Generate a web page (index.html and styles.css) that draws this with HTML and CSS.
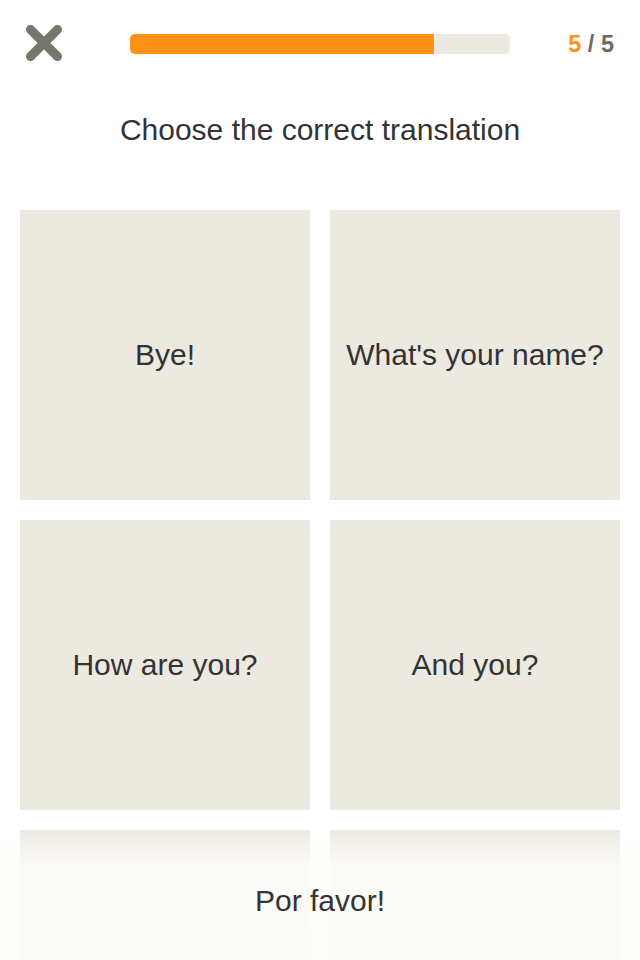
FILE: index.html
```html
<!DOCTYPE html>
<html>
<head>
<meta charset="utf-8">
<link rel="stylesheet" href="styles.css">
</head>
<body>
<div class="screen">
  <header class="top">
    <button class="close" aria-label="Close">
      <svg width="38" height="38" viewBox="0 0 38 38">
        <path d="M5.5 5.5 L32.5 32.5 M32.5 5.5 L5.5 32.5" stroke="#76766a" stroke-width="9" stroke-linecap="round" fill="none"/>
      </svg>
    </button>
    <div class="progress"><div class="fill" style="width:80%"></div></div>
    <div class="count"><span class="cur">5</span> / 5</div>
  </header>
  <h1 class="title">Choose the correct translation</h1>
  <div class="grid">
    <div class="card">Bye!</div>
    <div class="card">What's your name?</div>
    <div class="card">How are you?</div>
    <div class="card">And you?</div>
    <div class="card"></div>
    <div class="card"></div>
  </div>
  <div class="prompt">Por favor!</div>
</div>
</body>
</html>
```
FILE: styles.css
```css
html, body {
  margin: 0;
  padding: 0;
  background: #ffffff;
  overflow: hidden;
}
.screen {
  position: relative;
  width: 640px;
  height: 960px;
  overflow: hidden;
  font-family: "Liberation Sans", Arial, sans-serif;
  color: #333333;
}
.top {
  display: flex;
  align-items: center;
  height: 88px;
  padding: 0 26px 0 25px;
}
.close {
  border: 0;
  background: none;
  padding: 0;
  width: 38px;
  height: 38px;
  display: block;
  margin-top: -2px;
}
.close svg { display: block; }
.progress {
  margin-left: 67px;
  width: 380px;
  height: 20px;
  border-radius: 5px;
  background: #ece9e1;
  overflow: hidden;
}
.fill {
  height: 100%;
  background: #ff9117;
}
.count {
  margin-left: auto;
  font-weight: bold;
  font-size: 23.5px;
  color: #6b6b63;
}
.cur { color: #ff9117; }
.title {
  margin: 24px 0 0;
  text-align: center;
  font-weight: normal;
  font-size: 30px;
  line-height: 36px;
}
.grid {
  display: grid;
  grid-template-columns: 290px 290px;
  grid-auto-rows: 290px;
  gap: 20px;
  padding: 0 20px;
  margin-top: 62px;
}
.card {
  background: #ece9e1;
  display: flex;
  align-items: center;
  justify-content: center;
  font-size: 30px;
  color: #333333;
}
.prompt {
  position: absolute;
  left: 0;
  right: 0;
  top: 830px;
  bottom: 0;
  display: flex;
  align-items: center;
  justify-content: center;
  font-size: 30px;
  color: #333333;
  background: linear-gradient(to bottom, rgba(253,253,251,0) 0px, rgba(253,253,251,0.9) 35px, rgba(253,253,251,0.92) 100%);
  padding-top: 12px;
  box-sizing: border-box;
}
```
